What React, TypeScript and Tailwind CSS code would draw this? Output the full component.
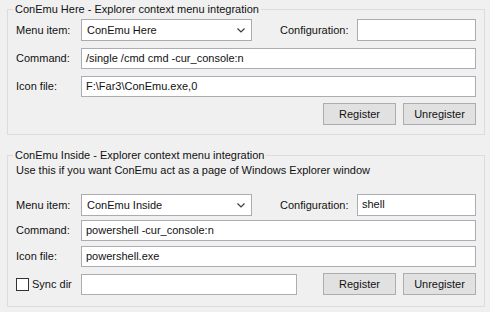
import React from "react";

function Field({ value = "", className = "" }: { value?: string; className?: string }) {
  return (
    <div className={"h-[21px] bg-white border border-[#abadb3] px-[4px] leading-[19px] whitespace-nowrap overflow-hidden " + className}>
      {value}
    </div>
  );
}

function Combo({ value }: { value: string }) {
  return (
    <div className="w-[171px] h-[22px] bg-white border border-[#acacac] pl-[5px] pr-[6px] flex items-center justify-between">
      <span className="leading-[20px]">{value}</span>
      <svg width="8" height="5" viewBox="0 0 8 5" className="mt-px">
        <path d="M0.5 0.5 L4 4 L7.5 0.5" fill="none" stroke="#3c3c3c" strokeWidth="1.2" />
      </svg>
    </div>
  );
}

function Btn({ children }: { children: React.ReactNode }) {
  return (
    <div className="w-[73px] h-[22px] bg-[#e1e1e1] border border-[#adadad] flex items-center justify-center">
      {children}
    </div>
  );
}

export default function App() {
  return (
    <div className="w-[490px] h-[312px] bg-[#f0f0f0] pt-px pl-[7px] pr-[5px] font-['Liberation_Sans',Arial,sans-serif] text-[11px] text-[#111]">
      <fieldset className="border border-[#dcdcdc] px-[8px] pt-[2px] pb-[9px]">
        <legend className="ml-[-3px] px-[2px] leading-[16px]">ConEmu Here - Explorer context menu integration</legend>
        <div className="flex items-center h-[22px]">
          <span className="w-[65px]">Menu item:</span>
          <Combo value="ConEmu Here" />
          <span className="ml-[28px] w-[77px]">Configuration:</span>
          <Field className="w-[119px] h-[22px]" />
        </div>
        <div className="flex items-center mt-[7px]">
          <span className="w-[65px]">Command:</span>
          <Field className="flex-1" value="/single /cmd cmd -cur_console:n" />
        </div>
        <div className="flex items-center mt-[7px]">
          <span className="w-[65px]">Icon file:</span>
          <Field className="flex-1" value="F:\Far3\ConEmu.exe,0" />
        </div>
        <div className="flex justify-end gap-[7px] mt-[6px]">
          <Btn>Register</Btn>
          <Btn>Unregister</Btn>
        </div>
      </fieldset>

      <fieldset className="border border-[#dcdcdc] px-[8px] pb-[11px] mt-[12px]">
        <legend className="ml-[-3px] px-[2px] leading-[16px]">ConEmu Inside - Explorer context menu integration</legend>
        <p className="leading-[15px]">Use this if you want ConEmu act as a page of Windows Explorer window</p>
        <div className="flex items-center h-[22px] mt-[16px]">
          <span className="w-[65px]">Menu item:</span>
          <Combo value="ConEmu Inside" />
          <span className="ml-[28px] w-[77px]">Configuration:</span>
          <Field className="w-[119px] h-[22px]" value="shell" />
        </div>
        <div className="flex items-center mt-[4px]">
          <span className="w-[65px]">Command:</span>
          <Field className="flex-1" value="powershell -cur_console:n" />
        </div>
        <div className="flex items-center mt-[5px]">
          <span className="w-[65px]">Icon file:</span>
          <Field className="flex-1" value="powershell.exe" />
        </div>
        <div className="flex items-center mt-[6px]">
          <label className="w-[65px] flex items-center">
            <span className="w-[13px] h-[13px] bg-white border border-[#333333] mr-[3px]" />
            Sync dir
          </label>
          <Field className="w-[216px]" />
          <div className="ml-auto flex gap-[7px]">
            <Btn>Register</Btn>
            <Btn>Unregister</Btn>
          </div>
        </div>
      </fieldset>
    </div>
  );
}
